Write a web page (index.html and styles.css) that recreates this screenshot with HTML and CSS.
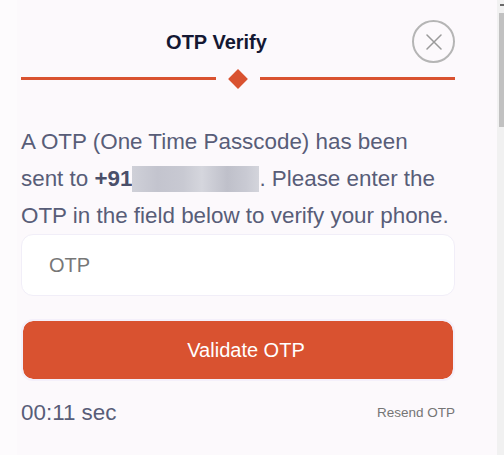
FILE: index.html
```html
<!DOCTYPE html>
<html lang="en">
<head>
<meta charset="utf-8">
<title>OTP Verify</title>
<link rel="stylesheet" href="styles.css">
</head>
<body>
<div class="dialog">
  <header class="header">
    <h1 class="title">OTP Verify</h1>
    <button class="close" type="button" aria-label="Close">
      <svg viewBox="0 0 16 16" width="16" height="16"><path d="M1 1L15 15M15 1L1 15" stroke="#9a9a9a" stroke-width="1.5" fill="none" stroke-linecap="round"/></svg>
    </button>
  </header>
  <div class="divider">
    <span class="line"></span>
    <span class="diamond"></span>
    <span class="line"></span>
  </div>
  <p class="message">A OTP (One Time Passcode) has been sent to <b class="num">+91</b><span class="blur"></span>. Please enter the OTP in the field below to verify your phone.</p>
  <input class="otp" type="text" placeholder="OTP">
  <button class="validate" type="button">Validate OTP</button>
  <div class="footer">
    <span class="timer">00:11 sec</span>
    <a class="resend">Resend OTP</a>
  </div>
</div>
<div class="scrollbar"><span class="arrow"></span><span class="thumb"></span></div>
</body>
</html>
```
FILE: styles.css
```css
*, *::before, *::after {
  box-sizing: border-box;
}
html, body {
  margin: 0;
  padding: 0;
}
body {
  background: #fdfbfd;
  font-family: "Liberation Sans", Arial, sans-serif;
  height: 455px;
  overflow: hidden;
}
.dialog {
  margin-left: 17px;
  width: 480px;
  padding: 20px 42px 0 4px;
  background: #fcf9fc;
  height: 455px;
}
.header {
  display: flex;
  align-items: center;
  height: 43px;
}
.title {
  flex: 1;
  margin: 0;
  text-align: center;
  font-size: 20px;
  line-height: 24px;
  font-weight: bold;
  color: #141833;
}
.close {
  flex: none;
  width: 43px;
  height: 43px;
  border: 2px solid #b5b5b5;
  border-radius: 50%;
  background: transparent;
  padding: 0;
  display: flex;
  align-items: center;
  justify-content: center;
}
.divider {
  display: flex;
  align-items: center;
  height: 3px;
  margin-top: 14px;
}
.line {
  flex: 1;
  height: 3px;
  background: #d95230;
}
.diamond {
  flex: none;
  width: 14px;
  height: 14px;
  background: #d95230;
  transform: rotate(45deg);
  margin: 0 15px;
}
.message {
  margin: 43px 0 0;
  font-size: 22.4px;
  line-height: 37px;
  color: #585d78;
}
.num {
  color: #4a4f6a;
}
.blur {
  display: inline-block;
  width: 127px;
  height: 26px;
  vertical-align: -6px;
  background: linear-gradient(90deg, #cfd0d8 0%, #c3c4ce 20%, #c8c9d2 40%, #d5d6dd 55%, #bfc0ca 75%, #c9cad3 90%, #d4d5dc 100%);
}
.otp {
  display: block;
  width: 100%;
  height: 62px;
  margin-top: 0;
  border: 1px solid #f1eef8;
  border-radius: 12px;
  background: #ffffff;
  padding: 0 0 0 27px;
  font-family: inherit;
  font-size: 20px;
  color: #333;
  outline: none;
}
.otp::placeholder {
  color: #777777;
}
.validate {
  display: block;
  width: 434px;
  height: 62px;
  margin-top: 23px;
  padding: 0 0 0 16px;
  border: 2px solid #f4f0fb;
  border-radius: 12px;
  background: #d95230;
  background-clip: padding-box;
  color: #ffffff;
  font-family: inherit;
  font-size: 20px;
}
.footer {
  display: flex;
  align-items: center;
  justify-content: space-between;
  margin-top: 19px;
}
.timer {
  font-size: 22.4px;
  line-height: 25px;
  color: #585d78;
}
.resend {
  font-size: 13.5px;
  color: #757575;
}
.scrollbar {
  position: fixed;
  top: 0;
  right: 0;
  width: 7px;
  height: 455px;
  background: #f1f1f1;
}
.thumb {
  position: absolute;
  top: 13px;
  left: 2px;
  right: 0;
  height: 114px;
  background: #c1c1c1;
}
.arrow {
  position: absolute;
  top: 4px;
  left: 3px;
  width: 4px;
  height: 2px;
  background: #6a6a6a;
}
```
